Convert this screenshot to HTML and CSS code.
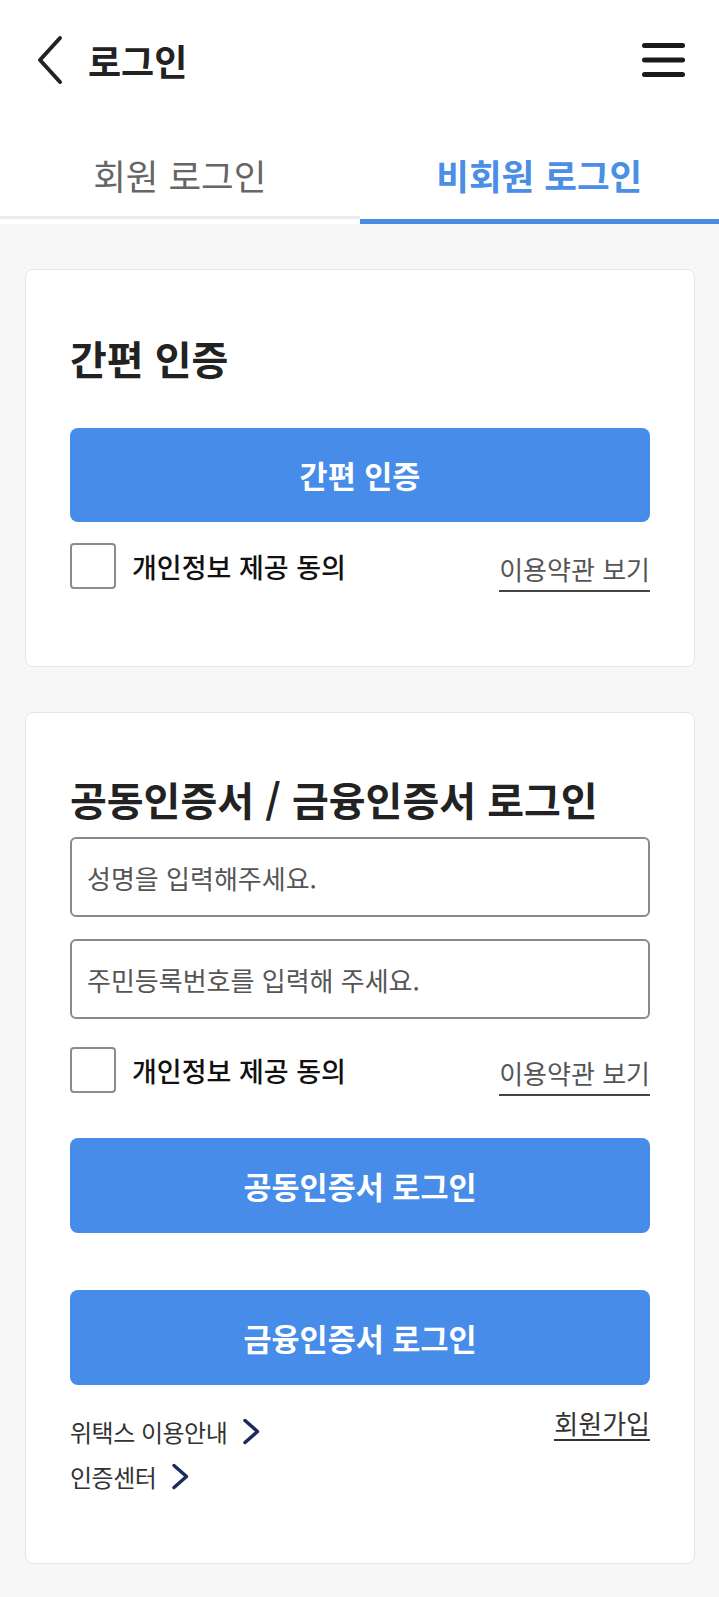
FILE: index.html
```html
<!DOCTYPE html>
<html lang="ko">
<head>
  <meta charset="UTF-8">
  <meta name="viewport" content="width=device-width, initial-scale=1.0">
  <title>로그인</title>
  <link rel="stylesheet" href="styles.css">
</head>
<body>
  <!-- Top Bar -->
  <div class="topbar">
    <svg class="back-icon" width="28" height="52" viewBox="0 0 28 52">
      <path d="M24 4 L4 26 L24 48" fill="none" stroke="#222" stroke-width="4" stroke-linecap="round" stroke-linejoin="round"/>
    </svg>
    <div class="page-title">로그인</div>
    <svg class="menu-icon" width="43" height="36" viewBox="0 0 43 36">
      <g stroke="#1a1a1a" stroke-width="5" stroke-linecap="round">
        <line x1="2.5" y1="3.5" x2="40.5" y2="3.5"/>
        <line x1="2.5" y1="18" x2="40.5" y2="18"/>
        <line x1="2.5" y1="32.5" x2="40.5" y2="32.5"/>
      </g>
    </svg>
  </div>

  <!-- Tabs -->
  <div class="tabs">
    <div class="tab">회원 로그인</div>
    <div class="tab active">비회원 로그인</div>
  </div>

  <!-- Main Content -->
  <div id="content">
    <!-- Simple auth -->
    <div class="card card-simple">
      <div class="card-title">간편 인증</div>
      <button class="main-btn">간편 인증</button>
      <div class="agree-row">
        <input type="checkbox" class="agree-box">
        <span class="agree-label">개인정보 제공 동의</span>
        <a href="#" class="terms-link">이용약관 보기</a>
      </div>
    </div>

    <!-- Certificate login -->
    <div class="card card-cert">
      <div class="card-title cert-title">공동인증서 / 금융인증서 로그인</div>
      <input type="text" class="text-input" placeholder="성명을 입력해주세요.">
      <input type="text" class="text-input" placeholder="주민등록번호를 입력해 주세요.">
      <div class="agree-row">
        <input type="checkbox" class="agree-box">
        <span class="agree-label">개인정보 제공 동의</span>
        <a href="#" class="terms-link">이용약관 보기</a>
      </div>
      <button class="main-btn btn-cert">공동인증서 로그인</button>
      <button class="main-btn btn-fin">금융인증서 로그인</button>

      <div class="card-footer">
        <div class="guide-links">
          <a href="#" class="guide-link">위택스 이용안내
            <svg width="19" height="27" viewBox="0 0 19 27"><path d="M3 2.5 L15.5 13.5 L3 24.5" fill="none" stroke="#1c2a5c" stroke-width="3.5" stroke-linecap="round" stroke-linejoin="round"/></svg>
          </a>
          <a href="#" class="guide-link">인증센터
            <svg width="19" height="27" viewBox="0 0 19 27"><path d="M3 2.5 L15.5 13.5 L3 24.5" fill="none" stroke="#1c2a5c" stroke-width="3.5" stroke-linecap="round" stroke-linejoin="round"/></svg>
          </a>
        </div>
        <a href="#" class="join-link">회원가입</a>
      </div>
    </div>
  </div>
</body>
</html>
```

FILE: styles.css
```css
/* Global Styles */
body {
  margin: 0;
  padding: 0;
  background-color: #f7f7f7;
  font-family: "Noto Sans CJK KR", "Noto Sans", sans-serif;
  color: #222;
}

a {
  text-decoration: none;
  color: inherit;
}

/* Top Bar */
.topbar {
  height: 120px;
  background-color: #fff;
  display: flex;
  align-items: center;
  padding: 0 34px 0 36px;
}

.page-title {
  margin-left: 24px;
  font-size: 36px;
  line-height: 40px;
  font-weight: 700;
  color: #222;
  flex: 1;
}

/* Tabs */
.tabs {
  display: flex;
  background-color: #fff;
}

.tab {
  flex: 1;
  height: 104px;
  box-sizing: border-box;
  padding-top: 10px;
  display: flex;
  justify-content: center;
  align-items: center;
  font-size: 35.5px;
  color: #666;
  border-bottom: 5px solid #fff;
  box-shadow: inset 0 -3px 0 #ebebeb;
}

.tab.active {
  color: #4a8ee6;
  font-weight: 700;
  border-bottom-color: #4a8ce8;
  box-shadow: none;
}

/* Content */
#content {
  padding: 45px 24px 33px 25px;
  display: flex;
  flex-direction: column;
  gap: 45px;
}

.card {
  background-color: #fff;
  border: 1px solid #e6e6e6;
  border-radius: 8px;
  padding: 0 44px;
  display: flex;
  flex-direction: column;
}

.card-simple {
  padding-top: 65px;
  padding-bottom: 77px;
}

.card-cert {
  padding-top: 63px;
  padding-bottom: 64px;
}

.card-title {
  font-size: 40px;
  line-height: 46px;
  font-weight: 700;
  color: #222;
  margin-bottom: 47px;
}

.cert-title {
  margin-bottom: 15px;
}

/* Buttons */
.main-btn {
  height: 94px;
  border: none;
  border-radius: 8px;
  background-color: #488ce9;
  color: #fff;
  font-family: inherit;
  font-size: 30.5px;
  font-weight: 700;
  cursor: pointer;
}

.btn-cert {
  margin-top: 45px;
  height: 95px;
}

.btn-fin {
  margin-top: 57px;
  height: 95px;
}

/* Agreement Row */
.agree-row {
  display: flex;
  align-items: center;
  margin-top: 21px;
}

.card-cert .agree-row {
  margin-top: 28px;
}

.agree-box {
  appearance: none;
  -webkit-appearance: none;
  margin: 0;
  width: 46px;
  height: 46px;
  border: 2px solid #8c8c8c;
  border-radius: 4px;
  background-color: #fff;
}

.agree-label {
  margin-left: 16px;
  font-size: 27px;
  font-weight: 500;
  color: #111;
  flex: 1;
}

.terms-link {
  align-self: flex-end;
  margin-bottom: -3px;
  font-size: 26px;
  line-height: 30px;
  color: #555;
  padding-bottom: 6px;
  border-bottom: 2px solid #444;
}

/* Inputs */
.text-input {
  height: 80px;
  box-sizing: border-box;
  border: 2px solid #8a8a8a;
  border-radius: 6px;
  padding: 0 15px;
  font-family: inherit;
  font-size: 26px;
  color: #222;
  outline: none;
}

.text-input + .text-input {
  margin-top: 22px;
}

.text-input::placeholder {
  color: #555;
}

/* Card Footer */
.card-footer {
  margin-top: 24px;
  display: flex;
  justify-content: space-between;
  align-items: flex-start;
}

.guide-links {
  display: flex;
  flex-direction: column;
}

.guide-link {
  display: flex;
  align-items: center;
  gap: 15px;
  height: 45px;
  font-size: 24px;
  letter-spacing: -0.5px;
  color: #333;
}

.join-link {
  margin-top: -1px;
  font-size: 26px;
  line-height: 30px;
  color: #333;
  padding-bottom: 1px;
  border-bottom: 2px solid #333;
}
```
